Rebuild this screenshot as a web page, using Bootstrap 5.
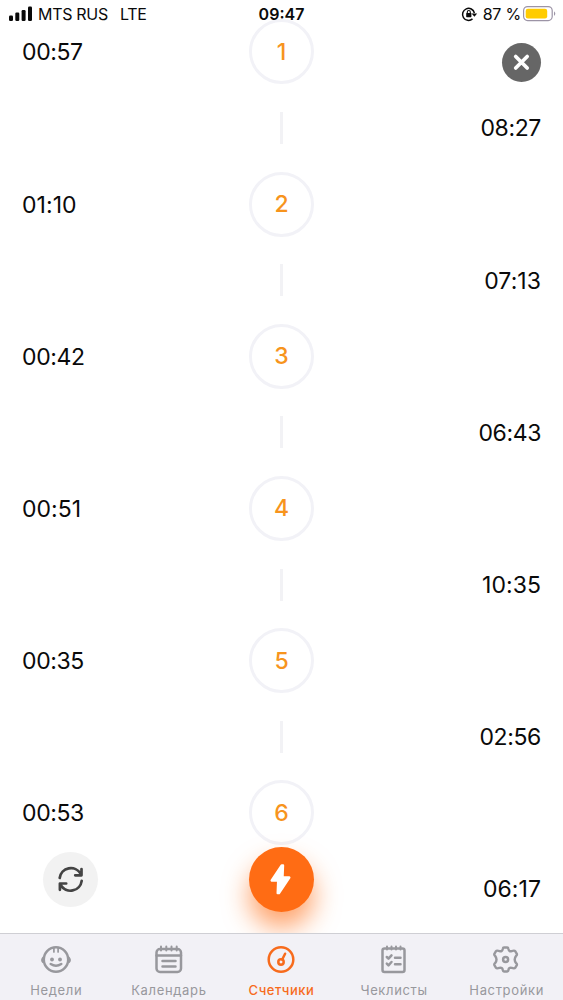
<!DOCTYPE html>
<html lang="ru">
<head>
<meta charset="utf-8">
<meta name="viewport" content="width=device-width, initial-scale=1">
<title>Счетчики</title>
<link href="https://cdn.jsdelivr.net/npm/bootstrap@5.3.0/dist/css/bootstrap.min.css" rel="stylesheet">
<style>
body{font-family:Inter,"Liberation Sans",sans-serif;color:#0a0a0a;background:#fff}
.screen{height:1000px;overflow:hidden}
.status{height:28px;font-size:16px;line-height:29px;z-index:3}
.status .carrier{letter-spacing:-.3px}
.status .clock{left:0;right:0;font-weight:600;font-size:16px;letter-spacing:0}
.status .pct{letter-spacing:-.2px;margin-left:-1px}
.timeline{margin-top:-14.2px;padding:0 22px}
.step{height:76.1px;font-size:23px;line-height:1}
.step .time{flex:1 1 0;letter-spacing:-.38px;padding-top:2px}
.step .has-one{letter-spacing:.05px}
.ring{width:65px;height:65px;border:3px solid #f2f2f7;color:#f7941d;font-size:23px;font-weight:500;padding-top:1px}
.tick{width:3px;height:32px;background:#f2f2f5}
.close-btn{right:22px;top:43px;width:39px;height:39px;background:#666;z-index:3}
.reset-btn{left:43px;top:852px;width:55px;height:55px;background:#f2f2f2}
.bolt-btn{left:249px;top:847px;width:65px;height:65px;background:#ff6c14;box-shadow:0 16px 26px rgba(255,108,20,.62)}
.tabs{height:67px;background:#f2f1f6;border-top:1px solid #cfcfd4;z-index:2;color:#98989d;font-size:13px;letter-spacing:.65px}
.tabs a{flex:1 1 0;color:inherit;padding-top:11px}
.tabs a.active{color:#f76b1c}
.tabs span{line-height:16px;margin-top:7px}
.tabs a.active span{font-weight:500;letter-spacing:.55px}
.tabs svg{fill:none;stroke:currentColor;stroke-width:2.5;stroke-linecap:round;stroke-linejoin:round;margin-right:1px}
</style>
</head>
<body>
<div class="screen position-relative d-flex flex-column">
  <header class="status position-relative d-flex flex-shrink-0 justify-content-between">
    <div class="d-flex carrier">
      <svg width="38" height="28" fill="#0a0a0a"><rect x="9" y="15.500" width="4" height="5.500" rx="1.200"/><rect x="15.300" y="12.500" width="4" height="8.500" rx="1.200"/><rect x="21.600" y="10" width="4" height="11" rx="1.200"/><rect x="28" y="6.500" width="4" height="14.500" rx="1.200"/></svg>
      <span>MTS RUS</span><span class="ms-2 ps-1">LTE</span>
    </div>
    <div class="clock position-absolute text-center">09:47</div>
    <div class="d-flex">
      <svg width="24" height="28" viewBox="0 0 24 28" fill="none" stroke="#0a0a0a" stroke-width="1.500"><path d="M12.500 18.900A6 6 0 1 1 14.400 13"/><path d="M11.600 13.600h5.600l-2.800 3.200z" fill="#0a0a0a" stroke="none"/><rect x="6.200" y="12.900" width="5.200" height="4.300" rx=".6" fill="#0a0a0a" stroke="none"/><path d="M7.300 13.500v-1.500a1.500 1.500 0 0 1 3 0v1.500" stroke-width="1.100"/></svg>
      <span class="pct">87 %</span>
      <svg width="42" height="28"><rect x="2.600" y="6.600" width="28.600" height="14" rx="4" fill="#fff" stroke="#9c94a6" stroke-width="1.200"/><rect x="4.700" y="8.700" width="21.500" height="9.800" rx="2.200" fill="#fc0"/><path d="M33 11.300q2.600 2.300 0 4.600z" fill="#9c94a6"/></svg>
    </div>
  </header>

  <main class="timeline" id="timeline"></main>

  <button class="close-btn btn p-0 border-0 rounded-circle position-absolute d-flex align-items-center justify-content-center" aria-label="Закрыть">
    <svg width="39" height="39" stroke="#fff" stroke-width="3.700" stroke-linecap="round"><path d="M13.700 13.500l11.500 11.500M25.200 13.500L13.700 25"/></svg>
  </button>
  <button class="reset-btn btn p-0 border-0 rounded-circle position-absolute d-flex" aria-label="Сбросить">
    <svg width="55" height="55" fill="none" stroke="#444" stroke-width="2.700" stroke-linecap="round" stroke-linejoin="round"><path d="M16.700 26a11.300 11.300 0 0 1 21-4.200M38.500 17v6.300h-6.300M38.700 28.800a11.300 11.300 0 0 1-21 4.200M16.900 37.800v-6.300h6.300"/></svg>
  </button>
  <button class="bolt-btn btn p-0 border-0 rounded-circle position-absolute d-flex" aria-label="Схватка">
    <svg width="65" height="65" fill="#fff" stroke="#fff" stroke-width="2.400" stroke-linejoin="round"><path d="M32.700 18.500L22.700 33.500h6.500l-.5 12.500h1.300L40.300 30.500h-6.800l.5-12z"/></svg>
  </button>

  <nav class="tabs mt-auto position-relative d-flex flex-shrink-0">
    <a href="#" class="d-flex flex-column align-items-center text-decoration-none">
      <svg width="30" height="30" viewBox="0 0 30 30"><circle cx="15" cy="14.500" r="12.200"/><path d="M2 12.800Q.2 15 2 17.200M28 12.800Q29.800 15 28 17.200" stroke-width="2"/><path d="M12.900 3v4M17.100 3v4" stroke-width="1.700"/><path d="M9.700 19q5.300 3.300 10.600 0"/><g fill="currentColor" stroke="none"><circle cx="11" cy="14.500" r="1.900"/><circle cx="19" cy="14.500" r="1.900"/></g></svg>
      <span>Недели</span></a>
    <a href="#" class="d-flex flex-column align-items-center text-decoration-none">
      <svg width="30" height="30" viewBox="0 0 30 30"><rect x="3.500" y="4" width="24.500" height="23" rx="3.500"/><path d="M3.500 10.500h24.500M9.500 16h13M9.500 21.500h13"/><path d="M8 1.500v4M13.300 1.500v4M18.500 1.500v4M23.700 1.500v4" stroke-width="2"/></svg>
      <span>Календарь</span></a>
    <a href="#" class="active d-flex flex-column align-items-center text-decoration-none">
      <svg width="30" height="30" viewBox="0 0 30 30"><circle cx="15" cy="14.500" r="12.300"/><circle cx="15" cy="17" r="2.700"/><path d="M16.200 14.500L19.100 8.700"/></svg>
      <span>Счетчики</span></a>
    <a href="#" class="d-flex flex-column align-items-center text-decoration-none">
      <svg width="30" height="30" viewBox="0 0 30 30"><rect x="3.500" y="3.500" width="22" height="23.500" rx="2"/><path d="M8 1.500v3M12.500 1.500v3M17 1.500v3M21.500 1.500v3" stroke-width="2"/><path d="M7.800 12l1.700 1.700 3-3.300M7.800 18.600l1.700 1.700 3-3.300M16 12.700h5.500M16 19.300h5.500"/></svg>
      <span>Чеклисты</span></a>
    <a href="#" class="d-flex flex-column align-items-center text-decoration-none">
      <svg width="30" height="30" viewBox="0 0 30 30"><path d="M13 2.500h3.200q1 0 1.200 1.400.5 2.900 3.300 2.200 2.800-.9 3.500.1l1.600 2.700q.5 1-.8 2.100-2.600 3.500 0 7 1.300 1.100.8 2.100l-1.600 2.700q-.7 1-3.500.1-2.800-.7-3.300 2.200-.2 1.400-1.200 1.400H13q-1 0-1.200-1.400-.5-2.900-3.300-2.200-2.800.9-3.500-.1L3.400 20.100q-.5-1 .8-2.100 2.600-3.500 0-7-1.300-1.100-.8-2.100L5 6.200q.7-1 3.500-.1 2.800.7 3.300-2.200.2-1.400 1.200-1.400z" stroke-width="2.400"/><circle cx="14.600" cy="14.500" r="2.500"/></svg>
      <span>Настройки</span></a>
  </nav>
</div>
<script>
const records=[["00:57","08:27"],["01:10","07:13"],["00:42","06:43"],["00:51","10:35"],["00:35","02:56"],["00:53","06:17"]];
const spacing=t=>t.includes("1")?"has-one":"";
document.getElementById("timeline").innerHTML=records.map(([length,pause],i)=>`
  <div class="step d-flex align-items-center"><div class="time ${spacing(length)}">${length}</div><div class="ring rounded-circle d-flex align-items-center justify-content-center">${i+1}</div><div class="time"></div></div>
  <div class="step d-flex align-items-center"><div class="time"></div>${i<5?'<div class="tick"></div>':''}<div class="time text-end ${spacing(pause)}">${pause}</div></div>`).join("");
</script>
<script src="https://cdn.jsdelivr.net/npm/bootstrap@5.3.0/dist/js/bootstrap.bundle.min.js"></script>
</body>
</html>
